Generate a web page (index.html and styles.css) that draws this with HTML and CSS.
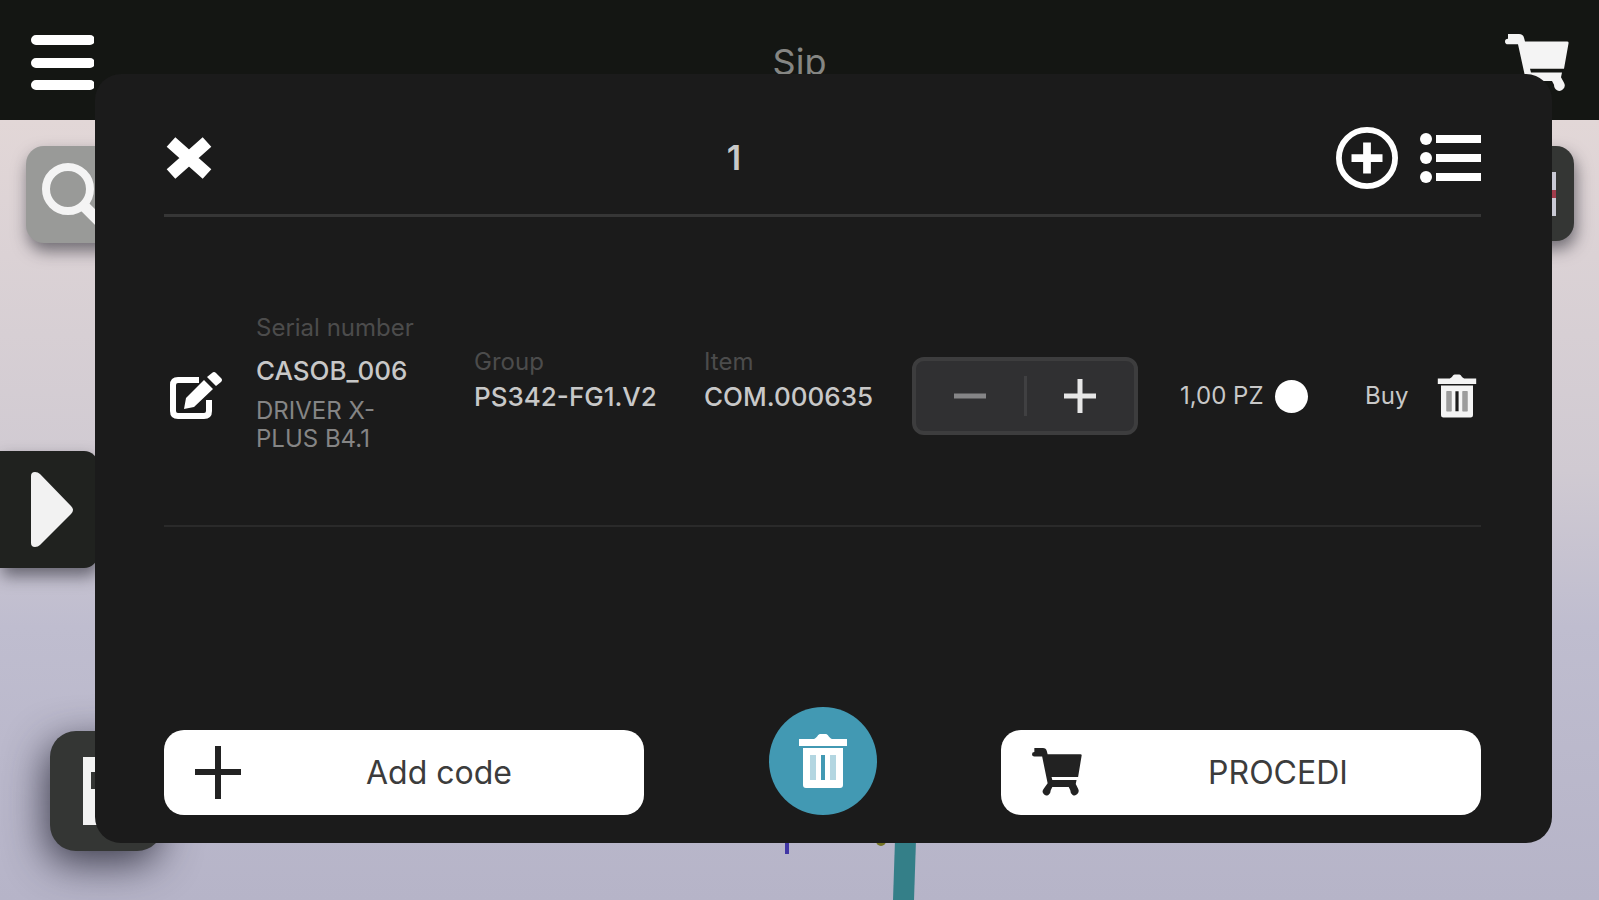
FILE: index.html
```html
<!DOCTYPE html>
<html lang="it">
	<head>
		<meta charset="UTF-8" />
		<meta name="viewport" content="width=device-width, initial-scale=1.0" />
		<title>Sip</title>
		<link rel="stylesheet" href="styles.css">
	</head>
	<body>
		<svg class="symbols" aria-hidden="true">
			<symbol id="trash" viewBox="0 0 50 56">
				<path d="M1 6h15c3-1 4-5 6-5h6c2 0 3 4 6 5h15v7H1z" />
				<path fill-rule="evenodd" d="M5 15h40v37q0 3-3 3H8q-3 0-3-3zM12 22v25h6V22zm11 0v25h4V22zm9 0v25h6V22z" />
				<path d="M12 22h6v25h-6zM32 22h6v25h-6z" opacity="0.6" />
			</symbol>
			<symbol id="cart" viewBox="0 0 64 64">
				<path d="M3 0h11q4 0 5 4l1 4h42q2 0 1.500 2l-4.500 27H25l1 4h31l-1 5 3 6q2 4-1 7-3 3-6 1-3-2-3-6l-2-4H26l-2 4q0 4-3 6-4 2-6-1-3-3 0-7l5-7-7-34H3q-3 0-3-3t3-3z" />
			</symbol>
		</svg>

		<div class="page">
			<header class="topbar">
				<button type="button" class="icon-button" aria-label="Menu">
					<svg width="64" height="58" viewBox="0 0 64 58"><path d="M6 6h54M6 29h54M6 51h54" stroke="#fff" stroke-width="10" stroke-linecap="round" /></svg>
				</button>
				<h1>Sip</h1>
				<button type="button" class="icon-button" aria-label="Cart">
					<svg width="64" height="60" viewBox="0 0 64 64" preserveAspectRatio="none"><use href="#cart" /></svg>
				</button>
			</header>

			<main class="stage">
				<svg class="drawing" width="160" height="60" viewBox="0 0 160 60">
					<path d="M8 0v14" stroke="#4136a5" stroke-width="4" />
					<circle cx="102" cy="1" r="5" fill="#747323" />
					<path d="M116 0h21l-2 60h-21z" fill="#347f88" />
				</svg>
				<button type="button" class="tile search" aria-label="Search">
					<svg width="64" height="64" viewBox="0 0 64 64" fill="none" stroke="#f4f4f4" stroke-width="8"><circle cx="27" cy="26" r="22" /><path d="M42 42l18 18" stroke-width="11" /></svg>
				</button>
				<button type="button" class="tile options" aria-label="Options">
					<svg width="8" height="44" viewBox="0 0 8 44"><path d="M3 0v44" stroke="#c9c9d4" stroke-width="4" /><path d="M3 18v8" stroke="#a03c4c" stroke-width="4" /></svg>
				</button>
				<button type="button" class="tile drawer" aria-label="Open panel">
					<svg width="42" height="76" viewBox="0 0 42 76" fill="#f2f2f2"><path d="M0 4q0-4 4-4 3 0 5 2l31 32q4 4 0 8L9 73q-2 2-5 2-4 0-4-4z" /></svg>
				</button>
				<button type="button" class="tile save" aria-label="Save">
					<svg width="64" height="68" viewBox="0 0 64 68" fill="#f2f2f2"><path fill-rule="evenodd" d="M0 0h64v68H0zM8 15v17h48V15z" /></svg>
				</button>
			</main>

			<section class="modal" role="dialog" aria-label="Items">
				<header class="modal-head">
					<button type="button" class="icon-button" aria-label="Close">
						<svg width="50" height="44" viewBox="0 0 50 44"><path d="M7 6l36 32M43 6L7 38" stroke="#fff" stroke-width="13" /></svg>
					</button>
					<h2>1</h2>
					<div class="actions">
						<button type="button" class="icon-button" aria-label="Add">
							<svg width="62" height="62" viewBox="0 0 64 64" fill="none" stroke="#fff"><circle cx="32" cy="32" r="29" stroke-width="6" /><path d="M32 16v32M16 32h32" stroke-width="8" /></svg>
						</button>
						<button type="button" class="icon-button" aria-label="List">
							<svg width="62" height="52" viewBox="0 0 62 52" fill="#fff"><circle cx="7" cy="7" r="6" /><circle cx="7" cy="26" r="6" /><circle cx="7" cy="45" r="6" /><path d="M17 3h45v8H17zM17 22h45v8H17zM17 41h45v8H17z" /></svg>
						</button>
					</div>
				</header>

				<div class="item">
					<button type="button" class="icon-button control edit" aria-label="Edit">
						<svg width="54" height="48" viewBox="0 0 54 48"><path d="M30 8H9q-5 0-5 5v26q0 5 5 5h26q5 0 5-5V28" fill="none" stroke="#fff" stroke-width="6" /><path d="M35 8l9 9-19 18-10 2 2-11zM38 5l5-4q2-2 4 0l5 5q2 2 0 4l-5 4z" fill="#fff" /></svg>
					</button>
					<div class="field">
						<span class="label serial-label">Serial number</span>
						<span class="value serial-value">CASOB_006</span>
						<span class="note">DRIVER X-<br>PLUS B4.1</span>
					</div>
					<div class="field short">
						<span class="label">Group</span>
						<span class="value">PS342-FG1.V2</span>
					</div>
					<div class="field short">
						<span class="label">Item</span>
						<span class="value">COM.000635</span>
					</div>
					<div class="control">
						<div class="stepper">
							<button type="button" aria-label="Decrease">
								<svg width="34" height="36" viewBox="0 0 34 36"><path d="M1 18h32" stroke="#858587" stroke-width="5" /></svg>
							</button>
							<button type="button" aria-label="Increase">
								<svg width="34" height="36" viewBox="0 0 34 36"><path d="M1 18h32M17 1v34" stroke="#e6e6e6" stroke-width="5" /></svg>
							</button>
						</div>
					</div>
					<div class="control quantity">
						<span>1,00 PZ</span>
						<button type="button" class="dot" aria-label="Unit"></button>
					</div>
					<div class="control quantity">Buy</div>
					<button type="button" class="icon-button control" aria-label="Delete item">
						<svg width="40" height="46" fill="#f4f4f4"><use href="#trash" /></svg>
					</button>
				</div>

				<footer class="modal-foot">
					<button type="button" class="wide">
						<svg width="48" height="54" viewBox="0 0 48 54"><path d="M1 26h46M24 0v53" stroke="#222" stroke-width="6" /></svg>
						<span>Add code</span>
					</button>
					<button type="button" class="round" aria-label="Delete all">
						<svg width="50" height="56" fill="#fff"><use href="#trash" /></svg>
					</button>
					<button type="button" class="wide">
						<svg width="52" height="50" fill="#222"><use href="#cart" /></svg>
						<span>PROCEDI</span>
					</button>
				</footer>
			</section>
		</div>
	</body>
</html>
```

FILE: styles.css
```css
* {
	box-sizing: border-box;
}

body {
	margin: 0;
	font-family: Inter, "Liberation Sans", sans-serif;
	color: #c8c8c8;
}

button {
	margin: 0;
	padding: 0;
	border: none;
	font: inherit;
	cursor: pointer;
}

svg {
	display: block;
}

.symbols {
	position: absolute;
	width: 0;
	height: 0;
}

.page {
	position: relative;
	display: flex;
	flex-direction: column;
	min-height: 100vh;
	overflow: hidden;
}

.icon-button {
	background: none;
}

/* top bar */
.topbar {
	display: flex;
	justify-content: space-between;
	align-items: flex-start;
	height: 120px;
	padding: 34px 30px 0;
	background: #141613;
}

.topbar .icon-button svg {
	fill: #f4f4f4;
}

.topbar h1 {
	margin: 8px 0 0;
	font-size: 36px;
	line-height: 40px;
	font-weight: 400;
	color: #858683;
}

/* canvas behind the dialog */
.stage {
	position: relative;
	flex: 1;
	background: linear-gradient(#e2d7d7, #d0cad2 45%, #bfbdcf 65%, #b6b4c8);
}

.drawing {
	position: absolute;
	left: 779px;
	bottom: 0;
}

.tile {
	position: absolute;
	display: flex;
	align-items: center;
	border-radius: 18px;
	background: #343634;
	box-shadow: 2px 8px 16px rgba(40, 40, 50, 0.6);
}

.search {
	top: 26px;
	left: 26px;
	width: 98px;
	height: 97px;
	padding-left: 15px;
	background: #999a98;
}

.options {
	top: 26px;
	right: 25px;
	width: 98px;
	height: 95px;
	justify-content: flex-end;
	padding-right: 15px;
}

.drawer {
	top: 331px;
	left: 0;
	width: 98px;
	height: 117px;
	padding-left: 31px;
	border-radius: 0 14px 14px 0;
	background: #20221f;
}

.save {
	bottom: 49px;
	left: 50px;
	width: 113px;
	height: 120px;
	padding-left: 33px;
	border-radius: 26px;
	box-shadow: -4px 12px 40px rgba(30, 30, 45, 0.8);
}

/* dialog */
.modal {
	position: absolute;
	top: 74px;
	right: 47px;
	bottom: 57px;
	left: 95px;
	display: flex;
	flex-direction: column;
	padding: 0 71px 28px 69px;
	border-radius: 26px;
	background: #1b1b1b;
}

.modal-head {
	display: flex;
	align-items: center;
	height: 143px;
	padding-top: 28px;
	border-bottom: 3px solid #363636;
}

.modal-head h2 {
	flex: 1;
	margin: 0;
	padding-right: 82px;
	text-align: center;
	font-size: 34px;
	font-weight: 600;
	line-height: 40px;
}

.actions {
	display: flex;
	align-items: center;
	gap: 21px;
}

.item {
	display: grid;
	grid-template-columns: 92px 218fr 230fr 208fr 268fr 185fr 72fr 44px;
	align-items: center;
	padding: 94px 0 72px;
	border-bottom: 2px solid #2a2a2a;
}

.control {
	padding-top: 28px;
}

.edit {
	padding-left: 5px;
}

.field {
	display: flex;
	flex-direction: column;
	font-size: 26px;
	line-height: 35px;
}

.short {
	padding-bottom: 6px;
}

.label {
	font-size: 24px;
	color: #4c4c4c;
}

.value {
	font-weight: 500;
}

.serial-label {
	line-height: 34px;
}

.serial-value {
	line-height: 52px;
}

.note {
	font-size: 24px;
	line-height: 28px;
	color: #858585;
}

.stepper {
	display: flex;
	width: 226px;
	height: 78px;
	padding: 15px 0;
	border: 4px solid #3d3d3e;
	border-radius: 12px;
	background: #303032;
}

.stepper button {
	flex: 1;
	display: flex;
	justify-content: center;
	align-items: center;
	background: none;
}

.stepper button + button {
	border-left: 3px solid #404042;
}

.quantity {
	display: flex;
	align-items: center;
	gap: 11px;
	font-size: 24px;
	line-height: 34px;
	white-space: nowrap;
}

.dot {
	width: 33px;
	height: 33px;
	border-radius: 50%;
	background: #fff;
}

.modal-foot {
	display: flex;
	justify-content: space-between;
	align-items: flex-end;
	margin-top: auto;
}

.wide {
	display: flex;
	align-items: center;
	flex: 0 0 480px;
	height: 85px;
	padding: 0 8px 0 30px;
	border-radius: 20px;
	background: #fff;
	color: #3c3c3c;
	font-size: 32px;
}

.wide span {
	flex: 1;
}

.round {
	display: flex;
	justify-content: center;
	align-items: center;
	width: 108px;
	height: 108px;
	border-radius: 50%;
	background: #4299b3;
}
```
